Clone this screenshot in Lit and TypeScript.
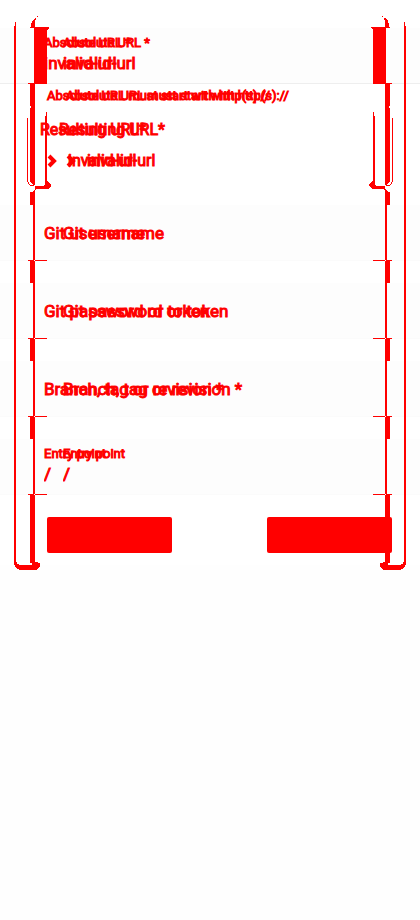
import { LitElement, html, css, svg } from "lit";
import { customElement, property } from "lit/decorators.js";

@customElement("twin-field")
export class TwinField extends LitElement {
  @property() label = "";
  @property() value = "";

  static styles = css`
    :host {
      display: grid;
      height: 56px;
      box-sizing: border-box;
      background: #fdfdfd;
      border-bottom: 1px solid #fbfbfb;
      overflow: hidden;
    }
    .copy {
      grid-area: 1 / 1;
      display: flex;
      flex-direction: column;
      justify-content: center;
      padding: 0 0 2px 44px;
    }
    .shifted {
      padding-left: 63px;
    }
    label {
      font-size: 13px;
      line-height: 16px;
    }
    input {
      width: 240px;
      height: 24px;
      padding: 0;
      border: 0;
      outline: 0;
      background: none;
      color: inherit;
      font: inherit;
      font-size: 17px;
      -webkit-text-stroke: inherit;
    }
    input::placeholder {
      color: inherit;
      opacity: 1;
    }
    .empty {
      padding-bottom: 0;
    }
  `;

  private copy(id: string, extra: string) {
    return html`<div class="copy ${extra} ${this.value ? "" : "empty"}">
      ${this.value
        ? html`<label for=${id}>${this.label}</label><input id=${id} .value=${this.value} />`
        : html`<input aria-label=${this.label} placeholder=${this.label} />`}
    </div>`;
  }

  render() {
    return html`${this.copy("a", "")}${this.copy("b", "shifted")}`;
  }
}

@customElement("app-root")
export class AppRoot extends LitElement {
  static styles = css`
    :host {
      display: block;
      position: relative;
      min-height: 100vh;
      background: #fefefe;
      color: #f00;
      font-family: Roboto, sans-serif;
      -webkit-text-stroke: 1px #f00;
    }
    .edge {
      position: absolute;
      top: 0;
      left: 0;
      width: 52px;
      height: 580px;
      pointer-events: none;
    }
    .right {
      left: auto;
      right: 0;
      transform: scaleX(-1);
    }
    form {
      padding-top: 28px;
      background: #fff;
    }
    .first {
      border-bottom-color: #eee;
    }
    .details {
      height: 121px;
      box-sizing: border-box;
      padding-top: 4px;
      display: flex;
      flex-direction: column;
    }
    .pair {
      display: grid;
    }
    .pair > * {
      grid-area: 1 / 1;
      margin: 0;
      white-space: nowrap;
      font-weight: 400;
    }
    .pair > .shifted {
      margin-left: 19px;
    }
    .help {
      padding-left: 47px;
      font-size: 13px;
      line-height: 16px;
    }
    .title {
      padding: 12px 0 0 40px;
      font-size: 16px;
      line-height: 28px;
    }
    .title h2 {
      font-size: 16px;
    }
    .entry {
      padding: 5px 0 0 47px;
      font-size: 16px;
      line-height: 24px;
    }
    .entry span {
      display: flex;
      align-items: center;
      gap: 11px;
    }
    .chevron {
      width: 10px;
      height: 14px;
    }
    .fields {
      display: flex;
      flex-direction: column;
      gap: 22px;
    }
    .actions {
      display: flex;
      justify-content: space-between;
      padding: 22px 28px 12px 47px;
    }
    button {
      width: 125px;
      height: 36px;
      padding: 0;
      border: 0;
      border-radius: 2px;
      background: #f00;
    }
  `;

  private edge(side: string) {
    return html`<svg class="edge ${side}" viewBox="0 0 52 580" fill="#f00" shape-rendering="crispEdges" aria-hidden="true">
      <path d="M14 26h1v-4h1v539q1 4 5 4h11v-5h3v2l5 1v3l-3 4h-16q-7-1-7-9z" />
      <path d="M37 16h1v1h-1zM35 18h1v2h-1v8h-4v-4q1-4 4-6zM30 27h19v1l-2 2v54h-13v-56h-4z" />
      <path d="M28 83h7v102h-1l-4-3v-98h-2z" />
      <path d="M27 118h1v63l2 4h4v1h-3q-4-2-4-6zM45 116h1v-4h1v69l4 3v2l-3 3h-12l-1 2v374h-2v-360h-3v-13h2l3-3v-3h9l1-2z" />
      ${[261, 339, 417].map((y) => svg`<path d="M28 ${y - 1}h19v1h-12v22h-5v-22h-2z" />`)}
      <path d="M28 494h19v1h-12v68h-5v-68h-2z" />
      <path fill="#fff" d="M30 106h1v2h-1zM34 260h1v1h-1zM34 338h1v1h-1zM34 416h1v1h-1zM34 494h1v1h-1z" />
    </svg>`;
  }

  private entry(extra: string) {
    return html`<span class=${extra}
      ><svg class="chevron" viewBox="0 0 10 14" fill="none" stroke="#f00" stroke-width="4" aria-hidden="true">
        <path d="M2 2l5 5-5 5" /></svg
      >invalid-url</span
    >`;
  }

  render() {
    const help = "Absolute URL must start with http(s)://";
    const title = "Resulting URL*";
    return html`
      <form>
        <twin-field class="first" label="Absolute URL *" value="invalid-url"></twin-field>
        <section class="details">
          <div class="pair help"><span>${help}</span><span class="shifted">${help}</span></div>
          <div class="pair title"><h2>${title}</h2><h2 class="shifted">${title}</h2></div>
          <div class="pair entry">${this.entry("")}${this.entry("shifted")}</div>
        </section>
        <div class="fields">
          <twin-field label="Git username"></twin-field>
          <twin-field label="Git password or token"></twin-field>
          <twin-field label="Branch, tag or revision *"></twin-field>
          <twin-field label="Entry point" value="/"></twin-field>
        </div>
        <div class="actions">
          <button type="button" aria-label="Cancel"></button>
          <button type="button" aria-label="Save"></button>
        </div>
      </form>
      ${this.edge("")}${this.edge("right")}
    `;
  }
}
